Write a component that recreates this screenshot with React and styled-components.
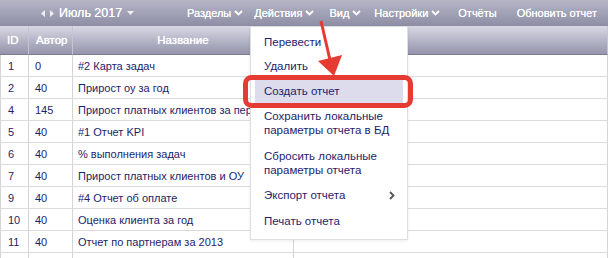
import React from 'react';
import styled, { createGlobalStyle } from 'styled-components';

const GlobalStyle = createGlobalStyle`
  html, body {
    margin: 0;
    padding: 0;
    background: #ffffff;
  }
  body {
    font-family: 'Liberation Sans', Arial, sans-serif;
  }
`;

const Page = styled.div`
  position: relative;
  width: 608px;
  height: 258px;
  overflow: hidden;
  background: #fff;
`;

const TopBar = styled.div`
  height: 26px;
  display: flex;
  align-items: center;
  background: linear-gradient(#b6b6c8, #8d8da5);
  color: #fff;
  font-size: 11px;
  white-space: nowrap;
  text-shadow: 0 0 0.6px #fff;
`;

const MonthPicker = styled.div`
  display: flex;
  align-items: center;
  gap: 5px;
  padding-left: 41px;
  font-size: 12.5px;
`;

const Nav = styled.div`
  display: flex;
  align-items: center;
  margin-left: auto;
  padding-right: 11px;
`;

const NavItem = styled.div`
  display: flex;
  align-items: center;
  gap: 3px;
  margin-left: ${p => p.$gap}px;
`;

const Table = styled.div`
  display: grid;
  grid-template-columns: 29px 44px 221px 1fr;
  color: #1d1d6a;
  font-size: 11px;
`;

const HeadCell = styled.div`
  height: 28px;
  display: flex;
  align-items: center;
  justify-content: ${p => (p.$center ? 'center' : 'flex-start')};
  padding-left: ${p => (p.$center ? 0 : 7)}px;
  background: linear-gradient(#d8d8e4, #9494ac);
  border-bottom: 1px solid #7c7c94;
  border-right: 1px solid #c4c4d4;
  color: #fff;
  font-size: 11.5px;
  text-shadow: 0 0 0.8px #fff;
  &:last-child {
    border-right: none;
  }
`;

const Cell = styled.div`
  height: 21px;
  display: flex;
  align-items: center;
  padding-left: ${p => p.$pad}px;
  border-bottom: 1px solid #dcdcdc;
  border-right: 1px solid #d4d4d4;
  border-left: ${p => (p.$first ? '1px solid #d4d4d4' : 'none')};
  white-space: nowrap;
  overflow: hidden;
`;

const Menu = styled.div`
  position: absolute;
  left: 250px;
  top: 26px;
  width: 148px;
  padding: 3px 4px 6px 4px;
  background: #fff;
  border: 1px solid #dedede;
  box-shadow: 0 1px 3px rgba(0, 0, 0, 0.08);
  color: #1d1d6a;
  font-size: 11.5px;
  white-space: nowrap;
`;

const MenuItem = styled.div`
  display: flex;
  align-items: center;
  justify-content: space-between;
  padding: ${p => (p.$multi ? 6 : 5)}px 8px ${p => (p.$multi ? 6 : 5)}px 9px;
  margin-top: ${p => p.$mt || 0}px;
  line-height: 14px;
  background: ${p => (p.$active ? '#dcdcec' : 'transparent')};
`;

const Overlay = styled.svg`
  position: absolute;
  left: 0;
  top: 0;
  pointer-events: none;
`;

const Tri = ({ dir }) => {
  const pts = {
    left: '4,0 4,7 0,3.5',
    right: '0,0 0,7 4,3.5',
    down: '0,0 7,0 3.5,4',
  }[dir];
  const w = dir === 'down' ? 7 : 4;
  const h = dir === 'down' ? 4 : 7;
  return (
    <svg width={w} height={h} viewBox={`0 0 ${w} ${h}`}>
      <polygon points={pts} fill="#eeeef4" />
    </svg>
  );
};

const Caret = () => (
  <svg width="9" height="6" viewBox="0 0 9 6">
    <polyline points="1,1 4.5,4.5 8,1" fill="none" stroke="#fff" strokeWidth="1.8" />
  </svg>
);

const SubArrow = () => (
  <svg width="6" height="9" viewBox="0 0 6 9">
    <polyline points="1,1 4.5,4.5 1,8" fill="none" stroke="#555" strokeWidth="1.8" />
  </svg>
);

const nav = [
  { label: 'Разделы', caret: true, gap: 0 },
  { label: 'Действия', caret: true, gap: 11 },
  { label: 'Вид', caret: true, gap: 15 },
  { label: 'Настройки', caret: true, gap: 13 },
  { label: 'Отчёты', caret: false, gap: 18 },
  { label: 'Обновить отчет', caret: false, gap: 20 },
];

const rows = [
  ['1', '0', '#2 Карта задач'],
  ['2', '40', 'Прирост оу за год'],
  ['4', '145', 'Прирост платных клиентов за период'],
  ['5', '40', '#1 Отчет KPI'],
  ['6', '40', '% выполнения задач'],
  ['7', '40', 'Прирост платных клиентов и ОУ'],
  ['9', '40', '#4 Отчет об оплате'],
  ['10', '40', 'Оценка клиента за год'],
  ['11', '40', 'Отчет по партнерам за 2013'],
  ['', '', ''],
];

const menu = [
  { label: 'Перевести' },
  { label: 'Удалить' },
  { label: 'Создать отчет', active: true, mt: 1 },
  { label: ['Сохранить локальные', 'параметры отчета в БД'], multi: true },
  { label: ['Сбросить локальные', 'параметры отчета'], multi: true },
  { label: 'Экспорт отчета', sub: true },
  { label: 'Печать отчета', mt: 2 },
];

export default function App() {
  return (
    <Page>
      <GlobalStyle />
      <TopBar>
        <MonthPicker>
          <Tri dir="left" />
          <Tri dir="right" />
          <span>Июль 2017</span>
          <Tri dir="down" />
        </MonthPicker>
        <Nav>
          {nav.map(n => (
            <NavItem key={n.label} $gap={n.gap}>
              {n.label}
              {n.caret && <Caret />}
            </NavItem>
          ))}
        </Nav>
      </TopBar>

      <Table>
        <HeadCell>ID</HeadCell>
        <HeadCell>Автор</HeadCell>
        <HeadCell $center>Название</HeadCell>
        <HeadCell />
        {rows.map((r, i) => (
          <React.Fragment key={i}>
            <Cell $first $pad={7}>{r[0]}</Cell>
            <Cell $pad={6}>{r[1]}</Cell>
            <Cell $pad={5}>{r[2]}</Cell>
            <Cell $pad={6} />
          </React.Fragment>
        ))}
      </Table>

      <Menu>
        {menu.map((m, i) => (
          <MenuItem key={i} $active={m.active} $multi={m.multi} $mt={m.mt}>
            <span>
              {Array.isArray(m.label)
                ? m.label.map((l, j) => <div key={j}>{l}</div>)
                : m.label}
            </span>
            {m.sub && <SubArrow />}
          </MenuItem>
        ))}
      </Menu>

      <Overlay width="608" height="258" viewBox="0 0 608 258">
        <rect x="245.5" y="77.5" width="165" height="28" rx="6" fill="none" stroke="#e53b33" strokeWidth="5" />
        <line x1="321" y1="21" x2="330" y2="60" stroke="#e53b33" strokeWidth="3" />
        <polygon points="334,76 318,61 342,55" fill="#e53b33" />
      </Overlay>
    </Page>
  );
}
